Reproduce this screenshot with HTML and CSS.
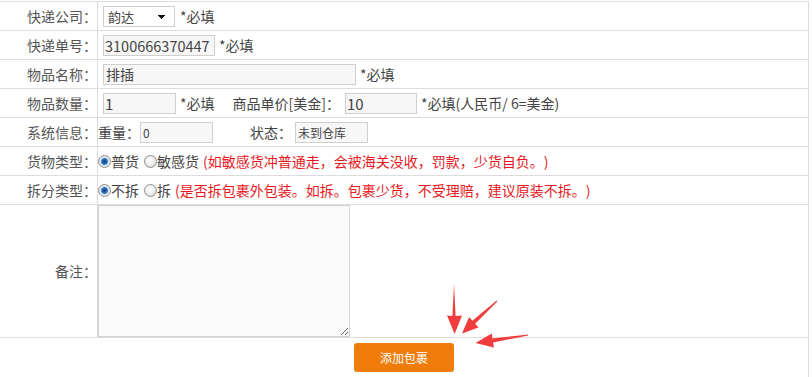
FILE: index.html
```html
<!DOCTYPE html>
<html lang="zh-CN">
<head>
<meta charset="utf-8">
<title>添加包裹</title>
<link rel="stylesheet" href="styles.css">
</head>
<body>
<div class="form">
  <div class="row">
    <div class="label">快递公司：</div>
    <div class="value">
      <select class="sel field"><option>韵达</option></select>
      <span class="req req-sel">*必填</span>
    </div>
  </div>
  <div class="row">
    <div class="label">快递单号：</div>
    <div class="value">
      <input class="inp big num field w-no" type="text" value="3100666370447">
      <span class="req">*必填</span>
    </div>
  </div>
  <div class="row">
    <div class="label">物品名称：</div>
    <div class="value">
      <input class="inp field w-name" type="text" value="排插">
      <span class="req">*必填</span>
    </div>
  </div>
  <div class="row">
    <div class="label">物品数量：</div>
    <div class="value">
      <input class="inp big field w-qty" type="text" value="1">
      <span class="req">*必填</span>
      <span class="price-label">商品单价[美金]：</span>
      <input class="inp big w-price" type="text" value="10">
      <span class="req">*必填(人民币/ 6=美金)</span>
    </div>
  </div>
  <div class="row">
    <div class="label">系统信息：</div>
    <div class="value">
      <span>重量：</span>
      <input class="inp small w-sys" type="text" value="0">
      <span class="state-label">状态：</span>
      <input class="inp small w-sys w-state" type="text" value="未到仓库">
    </div>
  </div>
  <div class="row">
    <div class="label">货物类型：</div>
    <div class="value">
      <input class="radio" type="radio" name="goods" checked><span>普货</span>
      <input class="radio radio-2" type="radio" name="goods"><span>敏感货</span>
      <span class="warn">(如敏感货冲普通走，会被海关没收，罚款，少货自负。)</span>
    </div>
  </div>
  <div class="row">
    <div class="label">拆分类型：</div>
    <div class="value">
      <input class="radio" type="radio" name="split" checked><span>不拆</span>
      <input class="radio radio-2" type="radio" name="split"><span>拆</span>
      <span class="warn">(是否拆包裹外包装。如拆。包裹少货，不受理赔，建议原装不拆。)</span>
    </div>
  </div>
  <div class="row row-note">
    <div class="label">备注：</div>
    <div class="value value-note">
      <textarea class="note"></textarea>
    </div>
  </div>
  <div class="row row-action">
    <button class="submit" type="button">添加包裹</button>
  </div>
</div>
<svg class="arrows" width="812" height="377" viewBox="0 0 812 377" aria-hidden="true">
  <polygon points="454,284 455.6,316 462,315.5 454.6,334 447,315.5 452.4,316"/>
  <polygon points="496.7,300.6 472.4,320.7 469.1,317 462,333.5 478.5,327.4 475.2,323.7 497.3,301.4"/>
  <polygon points="527.9,334.5 492.5,338.4 491.7,333.5 475.5,343 493.9,347.6 493.1,342.4 528.1,335.5"/>
</svg>
</body>
</html>
```

FILE: styles.css
```css
html, body {
  margin: 0;
  padding: 0;
  background: #fff;
}

body {
  position: relative;
  font-family: "Noto Sans CJK SC", "Microsoft YaHei", sans-serif;
  font-size: 14px;
  color: #444;
  overflow: hidden;
  text-spacing-trim: space-all;
}

.form {
  width: 809px;
  margin-top: 1px;
  border-top: 1px solid #dcdcdc;
  border-right: 1px solid #dcdcdc;
  box-sizing: border-box;
}

.row {
  display: flex;
  height: 29px;
  border-bottom: 1px solid #dcdcdc;
  box-sizing: border-box;
}

.label {
  flex: none;
  width: 98px;
  box-sizing: border-box;
  border-right: 1px solid #dcdcdc;
  display: flex;
  align-items: center;
  justify-content: flex-end;
  color: #555;
  white-space: nowrap;
}

.value {
  flex: 1;
  display: flex;
  align-items: center;
  white-space: nowrap;
  min-width: 0;
}

.req {
  margin-left: 4px;
  color: #444;
}

.req-sel {
  margin-left: 5px;
}

.inp {
  box-sizing: border-box;
  height: 21px;
  margin: 0;
  padding: 0 2px;
  border: 1px solid #cfcfcf;
  background: #f7f7f7;
  font-family: "Noto Sans CJK SC", "Microsoft YaHei", sans-serif;
  font-size: 14px;
  color: #444;
  outline: none;
}

.inp.big {
  font-size: 15px;
  padding-left: 1px;
}

.inp.num {
  font-size: 14.5px;
  padding-left: 1px;
  padding-right: 0;
}

.inp.small {
  font-size: 12px;
  padding-left: 2px;
}

.w-no { width: 112px; }
.w-name { width: 253px; }
.w-qty { width: 73px; }
.w-price { width: 72px; margin-left: 5px; }
.w-sys { width: 73px; }

.price-label {
  margin-left: 18px;
}

.state-label {
  margin-left: 37px;
}

.w-state {
  margin-left: 3px;
}

.sel {
  -webkit-appearance: none;
  appearance: none;
  box-sizing: border-box;
  width: 72px;
  height: 21px;
  margin: 0;
  padding: 0 0 0 4px;
  border: 1px solid #cfcfcf;
  border-radius: 0;
  background-color: #fff;
  background-image:
    linear-gradient(45deg, transparent 50%, #111 50%),
    linear-gradient(135deg, #111 50%, transparent 50%);
  background-position: calc(100% - 12px) 8px, calc(100% - 8px) 8px;
  background-size: 4px 4px;
  background-repeat: no-repeat;
  font-family: "Noto Sans CJK SC", "Microsoft YaHei", sans-serif;
  font-size: 13px;
  color: #444;
  outline: none;
}

.value .field {
  margin-left: 5px;
}

.radio {
  -webkit-appearance: none;
  appearance: none;
  flex: none;
  box-sizing: border-box;
  width: 13px;
  height: 13px;
  margin: 0;
  border: 1px solid #8e8e8e;
  border-radius: 50%;
  background: radial-gradient(circle at 45% 40%, #ffffff 0, #f2f2f2 40%, #cfcfcf 100%);
}

.radio:checked {
  background: radial-gradient(circle at 50% 50%, #123f7e 0, #1f5fae 2px, #5b95d6 3.3px, #e9eef4 4.2px, #d4d4d4 100%);
}

.value .radio-2 {
  margin-left: 5px;
}

.warn {
  margin-left: 4px;
  color: #e8191e;
}

.row-note {
  height: 133px;
}

.value-note {
  align-items: stretch;
}

.note {
  box-sizing: border-box;
  width: 252px;
  height: 132px;
  margin: 0;
  border: 1px solid #d2d2d2;
  background: #fafafa;
  resize: both;
  outline: none;
}

.row-action {
  height: 40px;
  border-bottom: none;
  justify-content: center;
  align-items: flex-start;
  padding-top: 5px;
}

.submit {
  width: 100px;
  height: 29px;
  border: none;
  border-radius: 3px;
  background: #f07c0c;
  color: #fff;
  font-family: "Noto Sans CJK SC", "Microsoft YaHei", sans-serif;
  font-size: 12px;
  padding: 0;
  cursor: pointer;
}

.arrows {
  position: absolute;
  left: 0;
  top: 0;
  pointer-events: none;
}

.arrows polygon {
  fill: #f03c3c;
}
```
